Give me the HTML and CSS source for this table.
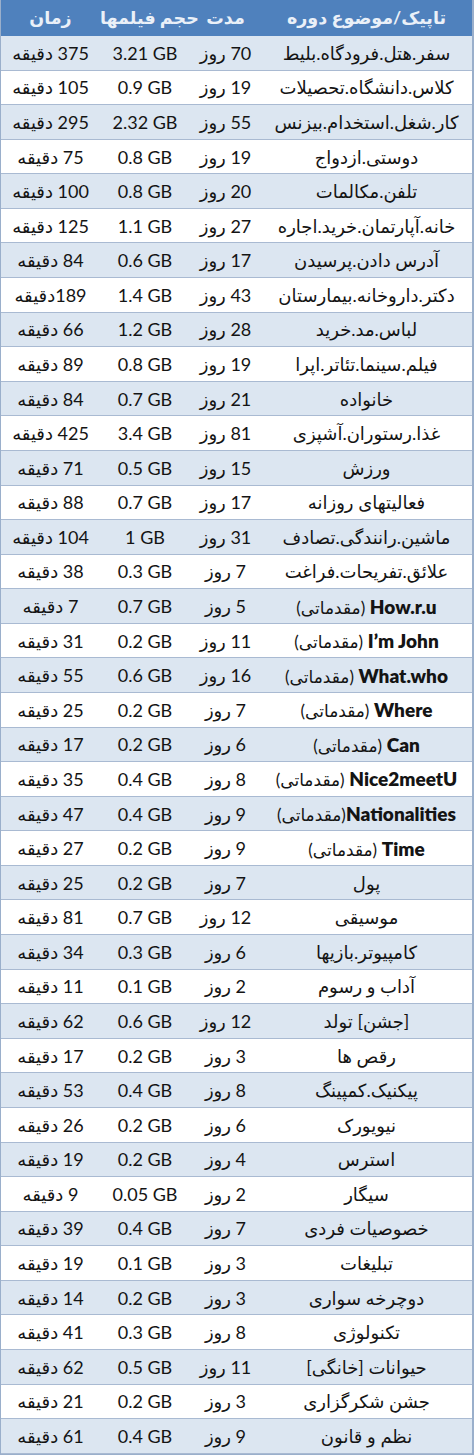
FILE: index.html
```html
<!DOCTYPE html>
<html lang="fa" dir="rtl">
<head>
<meta charset="utf-8">
<link rel="stylesheet" href="styles.css">
</head>
<body>
<div class="table">
  <div class="row head">
    <div class="c topic">تاپیک/موضوع دوره</div>
    <div class="c dur">مدت</div>
    <div class="c size">حجم فیلمها</div>
    <div class="c time">زمان</div>
  </div>
  <div class="row"><div class="c topic">سفر.هتل.فرودگاه.بليط</div><div class="c dur">70 روز</div><div class="c size">3.21 GB</div><div class="c time">375 دقیقه</div></div>
  <div class="row"><div class="c topic">کلاس.دانشگاه.تحصیلات</div><div class="c dur">19 روز</div><div class="c size">0.9 GB</div><div class="c time">105 دقیقه</div></div>
  <div class="row"><div class="c topic">کار.شغل.استخدام.بیزنس</div><div class="c dur">55 روز</div><div class="c size">2.32 GB</div><div class="c time">295 دقیقه</div></div>
  <div class="row"><div class="c topic">دوستی.ازدواج</div><div class="c dur">19 روز</div><div class="c size">0.8 GB</div><div class="c time">75 دقیقه</div></div>
  <div class="row"><div class="c topic">تلفن.مکالمات</div><div class="c dur">20 روز</div><div class="c size">0.8 GB</div><div class="c time">100 دقیقه</div></div>
  <div class="row"><div class="c topic">خانه.آپارتمان.خرید.اجاره</div><div class="c dur">27 روز</div><div class="c size">1.1 GB</div><div class="c time">125 دقیقه</div></div>
  <div class="row"><div class="c topic">آدرس دادن.پرسیدن</div><div class="c dur">17 روز</div><div class="c size">0.6 GB</div><div class="c time">84 دقیقه</div></div>
  <div class="row"><div class="c topic">دکتر.داروخانه.بیمارستان</div><div class="c dur">43 روز</div><div class="c size">1.4 GB</div><div class="c time">189دقیقه</div></div>
  <div class="row"><div class="c topic">لباس.مد.خرید</div><div class="c dur">28 روز</div><div class="c size">1.2 GB</div><div class="c time">66 دقیقه</div></div>
  <div class="row"><div class="c topic">فیلم.سینما.تئاتر.اپرا</div><div class="c dur">19 روز</div><div class="c size">0.8 GB</div><div class="c time">89 دقیقه</div></div>
  <div class="row"><div class="c topic">خانواده</div><div class="c dur">21 روز</div><div class="c size">0.7 GB</div><div class="c time">84 دقیقه</div></div>
  <div class="row"><div class="c topic">غذا.رستوران.آشپزی</div><div class="c dur">81 روز</div><div class="c size">3.4 GB</div><div class="c time">425 دقیقه</div></div>
  <div class="row"><div class="c topic">ورزش</div><div class="c dur">15 روز</div><div class="c size">0.5 GB</div><div class="c time">71 دقیقه</div></div>
  <div class="row"><div class="c topic">فعالیتهای روزانه</div><div class="c dur">17 روز</div><div class="c size">0.7 GB</div><div class="c time">88 دقیقه</div></div>
  <div class="row"><div class="c topic">ماشین.رانندگی.تصادف</div><div class="c dur">31 روز</div><div class="c size">1 GB</div><div class="c time">104 دقیقه</div></div>
  <div class="row"><div class="c topic">علائق.تفریحات.فراغت</div><div class="c dur">7 روز</div><div class="c size">0.3 GB</div><div class="c time">38 دقیقه</div></div>
  <div class="row"><div class="c topic"><b class="en">How.r.u</b> <span class="sub">(مقدماتی)</span></div><div class="c dur">5 روز</div><div class="c size">0.7 GB</div><div class="c time">7 دقیقه</div></div>
  <div class="row"><div class="c topic"><b class="en">I’m John</b> <span class="sub">(مقدماتی)</span></div><div class="c dur">11 روز</div><div class="c size">0.2 GB</div><div class="c time">31 دقیقه</div></div>
  <div class="row"><div class="c topic"><b class="en">What.who</b> <span class="sub">(مقدماتی)</span></div><div class="c dur">16 روز</div><div class="c size">0.6 GB</div><div class="c time">55 دقیقه</div></div>
  <div class="row"><div class="c topic"><b class="en">Where</b> <span class="sub">(مقدماتی)</span></div><div class="c dur">7 روز</div><div class="c size">0.2 GB</div><div class="c time">25 دقیقه</div></div>
  <div class="row"><div class="c topic"><b class="en">Can</b> <span class="sub">(مقدماتی)</span></div><div class="c dur">6 روز</div><div class="c size">0.2 GB</div><div class="c time">17 دقیقه</div></div>
  <div class="row"><div class="c topic"><b class="en">Nice2meetU</b> <span class="sub">(مقدماتی)</span></div><div class="c dur">8 روز</div><div class="c size">0.4 GB</div><div class="c time">35 دقیقه</div></div>
  <div class="row"><div class="c topic"><b class="en">Nationalities</b><span class="sub">(مقدماتی)</span></div><div class="c dur">9 روز</div><div class="c size">0.4 GB</div><div class="c time">47 دقیقه</div></div>
  <div class="row"><div class="c topic"><b class="en">Time</b> <span class="sub">(مقدماتی)</span></div><div class="c dur">9 روز</div><div class="c size">0.2 GB</div><div class="c time">27 دقیقه</div></div>
  <div class="row"><div class="c topic">پول</div><div class="c dur">7 روز</div><div class="c size">0.2 GB</div><div class="c time">25 دقیقه</div></div>
  <div class="row"><div class="c topic">موسیقی</div><div class="c dur">12 روز</div><div class="c size">0.7 GB</div><div class="c time">81 دقیقه</div></div>
  <div class="row"><div class="c topic">کامپیوتر.بازیها</div><div class="c dur">6 روز</div><div class="c size">0.3 GB</div><div class="c time">34 دقیقه</div></div>
  <div class="row"><div class="c topic">آداب و رسوم</div><div class="c dur">2 روز</div><div class="c size">0.1 GB</div><div class="c time">11 دقیقه</div></div>
  <div class="row"><div class="c topic">[جشن] تولد</div><div class="c dur">12 روز</div><div class="c size">0.6 GB</div><div class="c time">62 دقیقه</div></div>
  <div class="row"><div class="c topic">رقص ها</div><div class="c dur">3 روز</div><div class="c size">0.2 GB</div><div class="c time">17 دقیقه</div></div>
  <div class="row"><div class="c topic">پیکنیک.کمپینگ</div><div class="c dur">8 روز</div><div class="c size">0.4 GB</div><div class="c time">53 دقیقه</div></div>
  <div class="row"><div class="c topic">نیویورک</div><div class="c dur">6 روز</div><div class="c size">0.2 GB</div><div class="c time">26 دقیقه</div></div>
  <div class="row"><div class="c topic">استرس</div><div class="c dur">4 روز</div><div class="c size">0.2 GB</div><div class="c time">19 دقیقه</div></div>
  <div class="row"><div class="c topic">سیگار</div><div class="c dur">2 روز</div><div class="c size">0.05 GB</div><div class="c time">9 دقیقه</div></div>
  <div class="row"><div class="c topic">خصوصیات فردی</div><div class="c dur">7 روز</div><div class="c size">0.4 GB</div><div class="c time">39 دقیقه</div></div>
  <div class="row"><div class="c topic">تبلیغات</div><div class="c dur">3 روز</div><div class="c size">0.1 GB</div><div class="c time">19 دقیقه</div></div>
  <div class="row"><div class="c topic">دوچرخه سواری</div><div class="c dur">3 روز</div><div class="c size">0.2 GB</div><div class="c time">14 دقیقه</div></div>
  <div class="row"><div class="c topic">تکنولوژی</div><div class="c dur">8 روز</div><div class="c size">0.3 GB</div><div class="c time">41 دقیقه</div></div>
  <div class="row"><div class="c topic">حیوانات [خانگی]</div><div class="c dur">11 روز</div><div class="c size">0.5 GB</div><div class="c time">62 دقیقه</div></div>
  <div class="row"><div class="c topic">جشن شکرگزاری</div><div class="c dur">3 روز</div><div class="c size">0.2 GB</div><div class="c time">21 دقیقه</div></div>
  <div class="row"><div class="c topic">نظم و قانون</div><div class="c dur">9 روز</div><div class="c size">0.4 GB</div><div class="c time">61 دقیقه</div></div>
</div>
</body>
</html>
```
FILE: styles.css
```css
* { box-sizing: border-box; }
html, body { margin: 0; padding: 0; background: #ffffff; }
body {
  font-family: "Lato", "DejaVu Sans", sans-serif;
  color: #141414;
}
.table {
  width: 474px;
  height: 1455px;
  display: flex;
  flex-direction: column;
  border-left: 1px solid #9aafcb;
  border-right: 2px solid #9aafcb;
  border-bottom: 1px solid #9aafcb;
}
.row {
  flex: 1 1 0;
  display: grid;
  grid-template-columns: 211px 71px 90px 1fr;
  align-items: center;
  border-bottom: 1px solid #a9bad2;
  font-size: 18px;
}
.row:nth-child(even) { background: #dce6f1; }
.row:nth-child(odd) { background: #ffffff; }
.row.head {
  flex: 0 0 36px;
  background: #4f81bd;
  color: #eaf0f8;
  font-weight: bold;
  font-size: 17.5px;
  border-bottom: 1px solid #4f81bd;
}
.c {
  text-align: center;
  white-space: nowrap;
  overflow: visible;
}
.size { direction: ltr; }
.en { font-weight: 800; font-size: 19px; }
.sub { font-size: 17px; }
```
